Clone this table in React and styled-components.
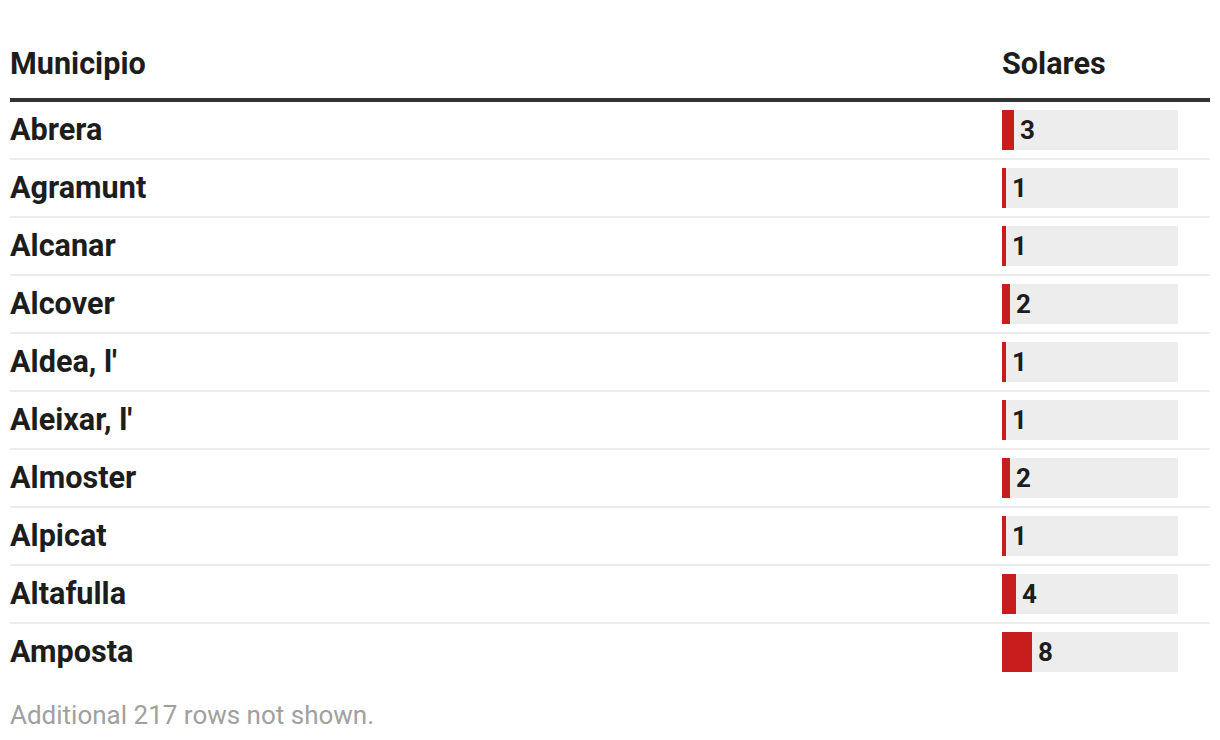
import React from "react";
import styled, { createGlobalStyle } from "styled-components";

const Global = createGlobalStyle`
  html, body { margin: 0; padding: 0; background: #fff; }
  body { font-family: Roboto, "Liberation Sans", sans-serif; color: #1d1d1d; }
`;

const Wrap = styled.div`
  padding: 0 10px;
  width: 1200px;
`;

const Table = styled.table`
  width: 1200px;
  border-collapse: collapse;
  table-layout: fixed;
`;

const Head = styled.th`
  text-align: left;
  font-weight: 700;
  font-size: 30.6px;
  line-height: 36px;
  height: 100px;
  padding: 0 0 16px 0;
  box-sizing: border-box;
  vertical-align: bottom;
  border-bottom: 4px solid #333;
  width: ${(p) => p.$w || "auto"};
`;

const Row = styled.tr`
  border-bottom: ${(p) => (p.$last ? "none" : "2px solid #ededed")};
`;

const Name = styled.td`
  height: 56px;
  padding: 0;
  font-size: 30.6px;
  font-weight: 700;
  line-height: 36px;
  vertical-align: middle;
`;

const BarCell = styled.td`
  padding: 0;
  vertical-align: middle;
`;

const Track = styled.div`
  width: 176px;
  height: 40px;
  background: #ededed;
  display: flex;
  align-items: center;
`;

const Fill = styled.div`
  height: 40px;
  background: #c71e1d;
  flex: none;
`;

const Value = styled.span`
  font-size: 26px;
  font-weight: 700;
  padding-left: 6px;
  line-height: 40px;
`;

const Note = styled.div`
  font-size: 26px;
  color: #a0a0a0;
  margin-top: 20px;
`;

const data = [
  ["Abrera", 3, 12],
  ["Agramunt", 1, 4],
  ["Alcanar", 1, 4],
  ["Alcover", 2, 8],
  ["Aldea, l'", 1, 4],
  ["Aleixar, l'", 1, 4],
  ["Almoster", 2, 8],
  ["Alpicat", 1, 4],
  ["Altafulla", 4, 14],
  ["Amposta", 8, 30],
];

export default function App() {
  return (
    <Wrap>
      <Global />
      <Table>
        <thead>
          <tr>
            <Head $w="992px">Municipio</Head>
            <Head>Solares</Head>
          </tr>
        </thead>
        <tbody>
          {data.map(([n, v, w], i) => (
            <Row key={n} $last={i === data.length - 1}>
              <Name>{n}</Name>
              <BarCell>
                <Track>
                  <Fill style={{ width: w }} />
                  <Value>{v}</Value>
                </Track>
              </BarCell>
            </Row>
          ))}
        </tbody>
      </Table>
      <Note>Additional 217 rows not shown.</Note>
    </Wrap>
  );
}
